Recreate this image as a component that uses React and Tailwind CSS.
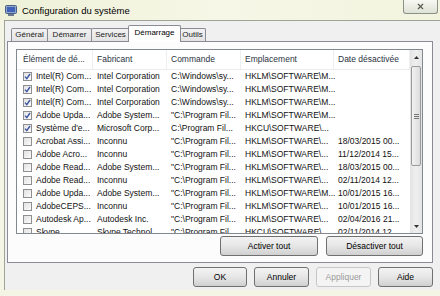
import { X } from 'lucide-react';

const ROWS = [
  [true, 'Intel(R) Com...', 'Intel Corporation', 'C:\\Windows\\sy...', 'HKLM\\SOFTWARE\\M...', ''],
  [true, 'Intel(R) Com...', 'Intel Corporation', 'C:\\Windows\\sy...', 'HKLM\\SOFTWARE\\M...', ''],
  [true, 'Intel(R) Com...', 'Intel Corporation', 'C:\\Windows\\sy...', 'HKLM\\SOFTWARE\\M...', ''],
  [true, 'Adobe Upda...', 'Adobe System...', '"C:\\Program Fil...', 'HKLM\\SOFTWARE\\M...', ''],
  [true, "Système d'e...", 'Microsoft Corp...', 'C:\\Program Fil...', 'HKCU\\SOFTWARE\\...', ''],
  [false, 'Acrobat Assi...', 'Inconnu', '"C:\\Program Fil...', 'HKLM\\SOFTWARE\\...', '18/03/2015 00...'],
  [false, 'Adobe Acro...', 'Inconnu', '"C:\\Program Fil...', 'HKLM\\SOFTWARE\\...', '11/12/2014 15...'],
  [false, 'Adobe Read...', 'Adobe System...', '"C:\\Program Fil...', 'HKLM\\SOFTWARE\\...', '18/03/2015 00...'],
  [false, 'Adobe Read...', 'Inconnu', '"C:\\Program Fil...', 'HKLM\\SOFTWARE\\...', '02/11/2014 12...'],
  [false, 'Adobe Upda...', 'Adobe System...', '"C:\\Program Fil...', 'HKLM\\SOFTWARE\\M...', '10/01/2015 16...'],
  [false, 'AdobeCEPS...', 'Inconnu', '"C:\\Program Fil...', 'HKLM\\SOFTWARE\\...', '10/01/2015 16...'],
  [false, 'Autodesk Ap...', 'Autodesk Inc.', '"C:\\Program Fil...', 'HKLM\\SOFTWARE\\...', '02/04/2016 21...'],
  [false, 'Skype', 'Skype Technol...', '"C:\\Program Fil...', 'HKCU\\SOFTWARE\\...', '02/11/2014 12...'],
];

function CheckBox({ checked }) {
  return (
    <span className="flex h-[9px] w-[9px] shrink-0 items-center justify-center border border-[#8f8f8f] bg-gradient-to-br from-[#e2e2e2] to-[#fbfbfb]">
      {checked && (
        <svg width="7" height="7" viewBox="0 0 7 7">
          <path d="M1 3.6 L2.8 5.6 L6 1" fill="none" stroke="#3c55a3" strokeWidth="1.4" />
        </svg>
      )}
    </span>
  );
}

function Tab({ label, w, active }) {
  if (active) {
    return (
      <div className={`relative z-10 -mb-px -ml-[2px] -mr-[1px] flex h-[17px] items-start justify-center rounded-t-[2px] border border-b-0 border-[#898c95] bg-white pt-[3px] text-black ${w}`}>
        {label}
      </div>
    );
  }
  return (
    <div className={`-ml-px flex h-[13px] items-center justify-center rounded-t-[2px] border border-b-0 border-[#898c95] bg-gradient-to-b from-[#f2f2f2] to-[#e3e3e3] text-[#222] ${w}`}>
      {label}
    </div>
  );
}

function Button({ children, w, disabled }) {
  return (
    <div
      className={`flex items-center justify-center rounded-[3px] border ${w} ${
        disabled
          ? 'border-[#c5c8cb] bg-[#f4f4f4] text-[#9a9a9a]'
          : 'border-[#707070] bg-gradient-to-b from-[#f3f3f3] via-[#e6e6e6] to-[#d0d0d0] text-black'
      }`}
    >
      {children}
    </div>
  );
}

const COLS = ['w-[76px] pl-[6px]', 'w-[74px] pl-[4px]', 'w-[74px] pl-[4px]', 'w-[93px] pl-[4px]', 'w-[76px] pl-[4px]'];

export default function App() {
  return (
    <div className="flex h-[296px] w-[440px] flex-col overflow-hidden bg-[#f4f5e4] text-[8.5px] leading-none" style={{ fontFamily: '"Liberation Sans", Arial, sans-serif' }}>
      {/* title bar */}
      <div className="flex h-[20px] shrink-0 bg-gradient-to-r from-[#eef1d8] via-[#f6f7e6] to-[#f2f4df]">
        <div className="flex items-center gap-[5px] pl-[5px] pt-[1px]">
          <svg width="12" height="11" viewBox="0 0 12 11">
            <rect x="0.5" y="0.5" width="11" height="8" rx="1" fill="#8fa6c8" stroke="#4a5e86" />
            <rect x="2" y="2" width="8" height="5" fill="#3f63b8" />
            <rect x="3" y="9" width="6" height="2" fill="#6d7a8e" />
          </svg>
          <span className="text-[9.5px] text-black">Configuration du système</span>
        </div>
        <div className="ml-auto mr-[2px] flex h-[14px] w-[35px] items-center justify-center rounded-b-[3px] border border-t-0 border-[#8b9187] bg-gradient-to-b from-[#f7f8f2] to-[#dfe2d6]">
          <X size={9} strokeWidth={3} className="text-[#55584f]" />
        </div>
      </div>

      {/* window body */}
      <div className="ml-[4px] flex h-[270px] w-[440px] shrink-0 flex-col border-l border-t border-[#9ea497] bg-[#f0f0f0] pl-[2px]">
        {/* tabs */}
        <div className="flex h-[20px] items-end pl-[5px] text-[8px]">
          <Tab label="Général" w="w-[37px]" />
          <Tab label="Démarrer" w="w-[45px]" />
          <Tab label="Services" w="w-[39px]" />
          <Tab label="Démarrage" w="w-[53px]" active />
          <Tab label="Outils" w="w-[27px]" />
        </div>

        {/* tab page */}
        <div className="flex h-[222px] w-[426px] flex-col border border-[#898c95] bg-[#fcfcfc] pl-[8px] pt-[7px]">
          <div className="flex h-[185px] w-[407px] border border-[#828790] bg-white">
            <div className="flex flex-1 flex-col overflow-hidden">
              <div className="flex h-[20px] shrink-0 items-center border-b border-[#ececec] bg-white text-[#2a3342]">
                {['Élément de dé...', 'Fabricant', 'Commande', 'Emplacement', 'Date désactivée'].map((h, i) => (
                  <div key={h} className={`flex h-full shrink-0 items-center border-r border-[#eceef1] ${COLS[i]}`}>
                    {h}
                  </div>
                ))}
              </div>
              {ROWS.map((r, i) => (
                <div key={i} className="flex h-[13px] shrink-0 items-center whitespace-nowrap text-[#111]">
                  <div className={`flex items-center gap-[4px] ${COLS[0]}`}>
                    <CheckBox checked={r[0]} />
                    <span>{r[1]}</span>
                  </div>
                  {r.slice(2).map((c, j) => (
                    <div key={j} className={`shrink-0 ${COLS[j + 1]}`}>{c}</div>
                  ))}
                </div>
              ))}
            </div>

            {/* scrollbar */}
            <div className="flex w-[12px] shrink-0 flex-col bg-gradient-to-r from-[#e4e4e4] via-[#efefef] to-[#e4e4e4]">
              <div className="flex h-[14px] items-center justify-center">
                <svg width="5" height="3" viewBox="0 0 5 3"><path d="M0 3 L2.5 0 L5 3Z" fill="#333" /></svg>
              </div>
              <div className="mx-[1px] mt-[2px] flex h-[100px] items-center justify-center rounded-[2px] border border-[#9a9a9a] bg-gradient-to-r from-[#f2f2f2] to-[#dcdcdc]">
                <svg width="5" height="5" viewBox="0 0 5 5">
                  <path d="M0 0.5H5M0 2.5H5M0 4.5H5" stroke="#777" />
                </svg>
              </div>
              <div className="mt-auto flex h-[14px] items-center justify-center">
                <svg width="5" height="3" viewBox="0 0 5 3"><path d="M0 0 L2.5 3 L5 0Z" fill="#333" /></svg>
              </div>
            </div>
          </div>

          <div className="mt-[2px] flex h-[20px] gap-[8px] pl-[204px]">
            <Button w="w-[98px]">Activer tout</Button>
            <Button w="w-[97px]">Désactiver tout</Button>
          </div>
        </div>

        {/* dialog buttons */}
        <div className="mt-[4px] flex h-[20px] gap-[7px] pl-[186px]">
          <Button w="w-[54px]">OK</Button>
          <Button w="w-[55px]">Annuler</Button>
          <Button w="w-[55px]" disabled>Appliquer</Button>
          <Button w="w-[55px]">Aide</Button>
        </div>
      </div>
    </div>
  );
}
